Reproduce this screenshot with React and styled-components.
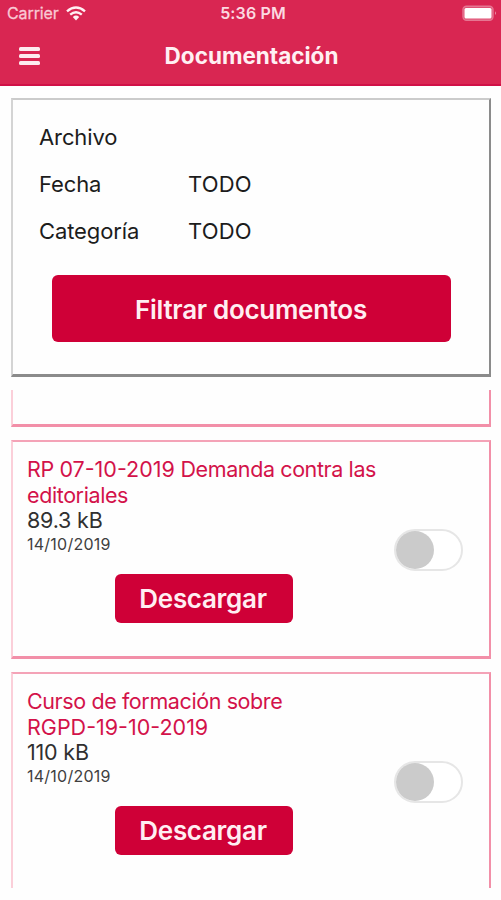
import React, { useState } from 'react';
import styled, { createGlobalStyle } from 'styled-components';

const GlobalStyle = createGlobalStyle`
  * {
    box-sizing: border-box;
  }

  body {
    margin: 0;
    background: #fefefe;
    font-family: Inter, "Liberation Sans", sans-serif;
    color: #1c1c1c;
  }
`;

const Screen = styled.div`
  width: 501px;
  height: 900px;
  display: flex;
  flex-direction: column;
  overflow: hidden;
`;

const Header = styled.header`
  height: 86px;
  flex: none;
  background: #d92652;
  border-bottom: 2px solid #d01046;
  color: #fff0f3;
`;

const StatusBar = styled.div`
  height: 27px;
  padding: 0 4px 1px 7px;
  display: grid;
  grid-template-columns: 1fr auto 1fr;
  align-items: center;
  font-size: 16px;
`;

const Carrier = styled.div`
  display: flex;
  align-items: center;
  gap: 7px;
  color: #f9c9d4;
`;

const CarrierName = styled.span`
  letter-spacing: -0.1px;
  -webkit-text-stroke: 0.3px;
`;

const Clock = styled.div`
  padding-left: 2px;
  font-weight: 600;
  letter-spacing: 0.15px;
  color: #fbd9e1;
`;

const BatteryIcon = styled.svg`
  justify-self: end;
`;

const NavBar = styled.div`
  height: 57px;
  padding: 0 18px 0 19px;
  display: grid;
  grid-template-columns: 1fr auto 1fr;
  align-items: center;
`;

const MenuButton = styled.button`
  width: 21px;
  height: 18px;
  padding: 0;
  border: none;
  background: none;
  display: flex;
  flex-direction: column;
  justify-content: space-between;
  cursor: pointer;
`;

const MenuBar = styled.span`
  height: 4px;
  border-radius: 1.5px;
  background: #fdebef;
`;

const Title = styled.h1`
  margin: 0;
  padding-left: 1px;
  font-size: 22.5px;
  font-weight: 700;
`;

const FilterPanel = styled.section`
  flex: none;
  height: 279px;
  margin: 12px 10px 0 11px;
  padding: 13px 38px 0 26px;
  border: 2px solid;
  border-color: #cbcbcb #8b8b8b #8b8b8b #d4d4d4;
  border-bottom-width: 3px;
`;

const FilterRow = styled.div`
  height: 47.3px;
  display: grid;
  grid-template-columns: 149px 1fr;
  align-items: center;
  font-size: 22px;
  letter-spacing: -0.1px;
`;

const FilterValue = styled.span`
  letter-spacing: 0.2px;
`;

const Button = styled.button`
  display: block;
  border: none;
  padding: 0;
  border-radius: 6px;
  background: #cf0037;
  color: #ffeef2;
  font-family: inherit;
  font-size: 26px;
  font-weight: 600;
  letter-spacing: -0.3px;
  cursor: pointer;
`;

const FilterButton = styled(Button)`
  width: 399px;
  height: 67px;
  margin: 20px 0 0 13px;
  padding: 2px 1px 0 0;
`;

const DocumentList = styled.div`
  flex: none;
  height: 498px;
  margin: 13px 10px 0 11px;
  display: flex;
  flex-direction: column;
  justify-content: flex-start;
  gap: 13px;
  overflow: hidden;
`;

const DocumentCard = styled.article`
  flex: none;
  height: 219px;
  padding: 14px 26px 0 14px;
  border: 2px solid;
  border-color: #f4a3b7 #f28fa8 #f28fa8 #fbcfd9;
  border-bottom-width: 3px;
`;

// Tail of a card that is mostly scrolled out of view
const ClippedCard = styled(DocumentCard)`
  height: 37px;
  padding: 0;
  border-top: none;
`;

const CardBody = styled.div`
  display: grid;
  grid-template-columns: 1fr 69px;
`;

const DocTitle = styled.h2`
  grid-column: 1 / -1;
  max-width: 365px;
  margin: 0 0 -1px;
  font-size: 21.5px;
  font-weight: 400;
  line-height: 26px;
  letter-spacing: -0.4px;
  color: #d3124a;
`;

// Codes and dates stay on one line, with looser spacing than words
const Code = styled.span`
  white-space: nowrap;
  letter-spacing: 0;
`;

const DocSize = styled.div`
  font-size: 21.5px;
  line-height: 26px;
  letter-spacing: -0.2px;
  color: #303030;
`;

const DocDate = styled.div`
  font-size: 16px;
  line-height: 22px;
  letter-spacing: 0.25px;
  color: #404040;
`;

const DownloadButton = styled(Button)`
  width: 178px;
  height: 49px;
  margin: 19px 0 0 88px;
  padding-right: 2px;
`;

const Toggle = styled.button`
  width: 69px;
  height: 42px;
  margin-top: 22px;
  margin-bottom: -16px;
  padding: 0;
  border: 2px solid #e6e6e6;
  border-radius: 21px;
  background: #fff;
  display: flex;
  justify-content: ${props => (props.$on ? 'flex-end' : 'flex-start')};
  cursor: pointer;
`;

const Knob = styled.span`
  width: 38px;
  height: 38px;
  border-radius: 50%;
  background: #cbcbcb;
`;

const documents = [
  { id: 1, title: 'RP 07-10-2019 Demanda contra las editoriales', size: '89.3 kB', date: '14/10/2019' },
  { id: 2, title: 'Curso de formación sobre RGPD-19-10-2019', size: '110 kB', date: '14/10/2019' }
];

const filters = [
  { label: 'Archivo', value: '' },
  { label: 'Fecha', value: 'TODO' },
  { label: 'Categoría', value: 'TODO' }
];

const Wifi = () => (
  <svg width="20" height="15" viewBox="0 0 20 15" fill="none" stroke="#fff0f3" strokeWidth="2.4">
    <path d="M1 5.3 Q10 -2.3 19 5.3" />
    <path d="M4.2 8.7 Q10 3.7 15.8 8.7" />
    <path d="M6.8 11 Q10 8.2 13.2 11 L10 14.4 Z" fill="#fff0f3" stroke="none" />
  </svg>
);

const Battery = () => (
  <BatteryIcon width="36" height="17" viewBox="0 0 36 17">
    <rect x="2" y="1.2" width="30" height="14" rx="3.5" fill="#e04f73" stroke="#e67692" strokeWidth="1.4" />
    <rect x="3.5" y="3" width="27" height="10.5" rx="1.5" fill="#fff" />
    <path d="M34 6.3 Q36 8.2 34 10.1 Z" fill="#ec8fa5" />
  </BatteryIcon>
);

const DocumentItem = ({ doc }) => {
  const [selected, setSelected] = useState(false);

  return (
    <DocumentCard>
      <CardBody>
        <DocTitle>
          {doc.title.split(/(\S*\d\S*)/).map((part, i) => (
            i % 2 ? <Code key={i}>{part}</Code> : part
          ))}
        </DocTitle>
        <div>
          <DocSize>{doc.size}</DocSize>
          <DocDate>{doc.date}</DocDate>
        </div>
        <Toggle
          $on={selected}
          role="switch"
          aria-checked={selected}
          aria-label={doc.title}
          onClick={() => setSelected(!selected)}
        >
          <Knob />
        </Toggle>
      </CardBody>
      <DownloadButton>Descargar</DownloadButton>
    </DocumentCard>
  );
};

const App = () => (
  <>
    <GlobalStyle />
    <Screen>
      <Header>
        <StatusBar>
          <Carrier>
            <CarrierName>Carrier</CarrierName>
            <Wifi />
          </Carrier>
          <Clock>5:36 PM</Clock>
          <Battery />
        </StatusBar>
        <NavBar>
          <MenuButton aria-label="Menú">
            <MenuBar />
            <MenuBar />
            <MenuBar />
          </MenuButton>
          <Title>Documentación</Title>
        </NavBar>
      </Header>

      <FilterPanel>
        {filters.map(filter => (
          <FilterRow key={filter.label}>
            <span>{filter.label}</span>
            <FilterValue>{filter.value}</FilterValue>
          </FilterRow>
        ))}
        <FilterButton>Filtrar documentos</FilterButton>
      </FilterPanel>

      <DocumentList>
        <ClippedCard />
        {documents.map(doc => (
          <DocumentItem key={doc.id} doc={doc} />
        ))}
      </DocumentList>
    </Screen>
  </>
);

export default App;
